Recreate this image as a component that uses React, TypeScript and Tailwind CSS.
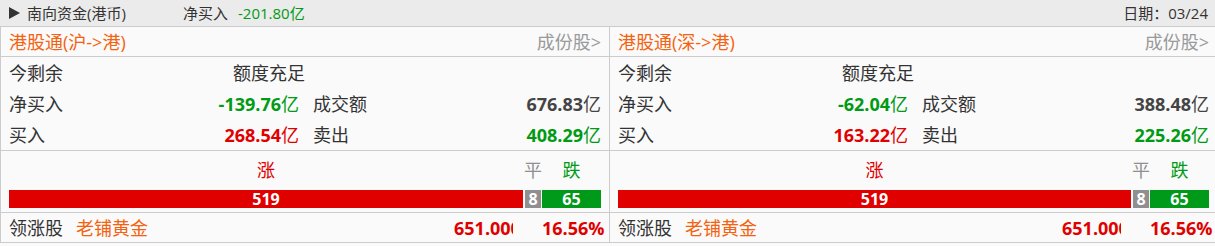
import React from 'react';

type Panel = {
  title: string;
  net: string;
  turnover: string;
  buy: string;
  sell: string;
  up: number;
  flat: number;
  down: number;
  leader: string;
  price: string;
  pct: string;
};

const panels: Panel[] = [
  {
    title: '港股通(沪->港)',
    net: '-139.76',
    turnover: '676.83',
    buy: '268.54',
    sell: '408.29',
    up: 519,
    flat: 8,
    down: 65,
    leader: '老铺黄金',
    price: '651.000',
    pct: '16.56%',
  },
  {
    title: '港股通(深->港)',
    net: '-62.04',
    turnover: '388.48',
    buy: '163.22',
    sell: '225.26',
    up: 519,
    flat: 8,
    down: 65,
    leader: '老铺黄金',
    price: '651.000',
    pct: '16.56%',
  },
];

function Amount({ value, color }: { value: string; color: string }) {
  return (
    <span className={color}>
      <span className="font-bold">{value}</span>亿
    </span>
  );
}

function FlowPanel({ p, first }: { p: Panel; first: boolean }) {
  const pad = first ? 'pl-2 pr-2' : 'pl-2 pr-[6px]';
  return (
    <div className={first ? 'w-[610px] border-l border-r border-[#cccccc]' : 'flex-1'}>
      {/* header */}
      <div className={`h-[30px] flex items-center justify-between border-b border-[#cccccc] ${pad}`}>
        <span className="text-[#f5620f]">{p.title}</span>
        <span className="text-[#999999]">成份股&gt;</span>
      </div>

      {/* quota / amounts */}
      <div className={`border-b border-[#cccccc] ${pad}`}>
        <div className="h-[31px] flex items-center">
          <span className="w-[224px]">今剩余</span>
          <span>额度充足</span>
        </div>
        <div className="h-[31px] flex items-center">
          <div className="w-[290px] flex justify-between">
            <span>净买入</span>
            <Amount value={p.net} color="text-[#009a14]" />
          </div>
          <div className="ml-[14px] flex-1 flex justify-between">
            <span>成交额</span>
            <Amount value={p.turnover} color="text-[#444444]" />
          </div>
        </div>
        <div className="h-[31px] flex items-center">
          <div className="w-[290px] flex justify-between">
            <span>买入</span>
            <Amount value={p.buy} color="text-[#e00000]" />
          </div>
          <div className="ml-[14px] flex-1 flex justify-between">
            <span>卖出</span>
            <Amount value={p.sell} color="text-[#009a14]" />
          </div>
        </div>
      </div>

      {/* up / flat / down */}
      <div className={`h-[62px] flex flex-col border-b border-[#cccccc] ${pad}`}>
        <div className="h-[37px] flex items-center gap-[1px]">
          <span className="flex-1 text-center text-[#e00000]">涨</span>
          <span className="w-[17px] text-center text-[#8f8f8f]">平</span>
          <span className="w-[59px] text-center text-[#009a14]">跌</span>
        </div>
        <div className="mt-[2px] h-[18px] flex gap-[1px] text-white font-bold text-[16px] leading-[18px]">
          <div className="flex-1 bg-[#e00000] text-center">{p.up}</div>
          <div className="w-[16px] ml-[1px] bg-[#8f8f8f] text-center">{p.flat}</div>
          <div className="w-[59px] bg-[#009a1a] text-center">{p.down}</div>
        </div>
      </div>

      {/* leader */}
      <div className={`h-[30px] flex items-center border-b border-[#cccccc] ${pad}`}>
        <span>领涨股</span>
        <span className="ml-[13px] text-[#f5620f]">{p.leader}</span>
        <span className="flex-1" />
        <span className="w-[59px] overflow-hidden whitespace-nowrap font-bold text-[#e00000]">{p.price}</span>
        <span className="ml-[29px] w-[59px] text-right whitespace-nowrap font-bold text-[#e00000]">{p.pct}</span>
      </div>
    </div>
  );
}

export default function App() {
  return (
    <div
      className="w-[1215px] h-[246px] bg-[#fafafa] text-[#333333] text-[18px] leading-none overflow-hidden"
      style={{ fontFamily: "'Open Sans','Noto Sans CJK SC',sans-serif" }}
    >
      {/* top bar */}
      <div className="h-[27px] flex items-center bg-[#ebebeb] border-b border-[#cccccc] text-[15px] pr-[7px]">
        <svg width="11" height="12" viewBox="0 0 11 12" className="ml-[9px]">
          <polygon points="0,0 11,6 0,12" fill="#333333" />
        </svg>
        <span className="ml-[7px] w-[156px]">南向资金(港币)</span>
        <span>净买入</span>
        <span className="ml-[10px] text-[#009a14]">-201.80亿</span>
        <span className="flex-1" />
        <span>日期：03/24</span>
      </div>

      <div className="flex">
        {panels.map((p, i) => (
          <FlowPanel key={p.title} p={p} first={i === 0} />
        ))}
      </div>
    </div>
  );
}
